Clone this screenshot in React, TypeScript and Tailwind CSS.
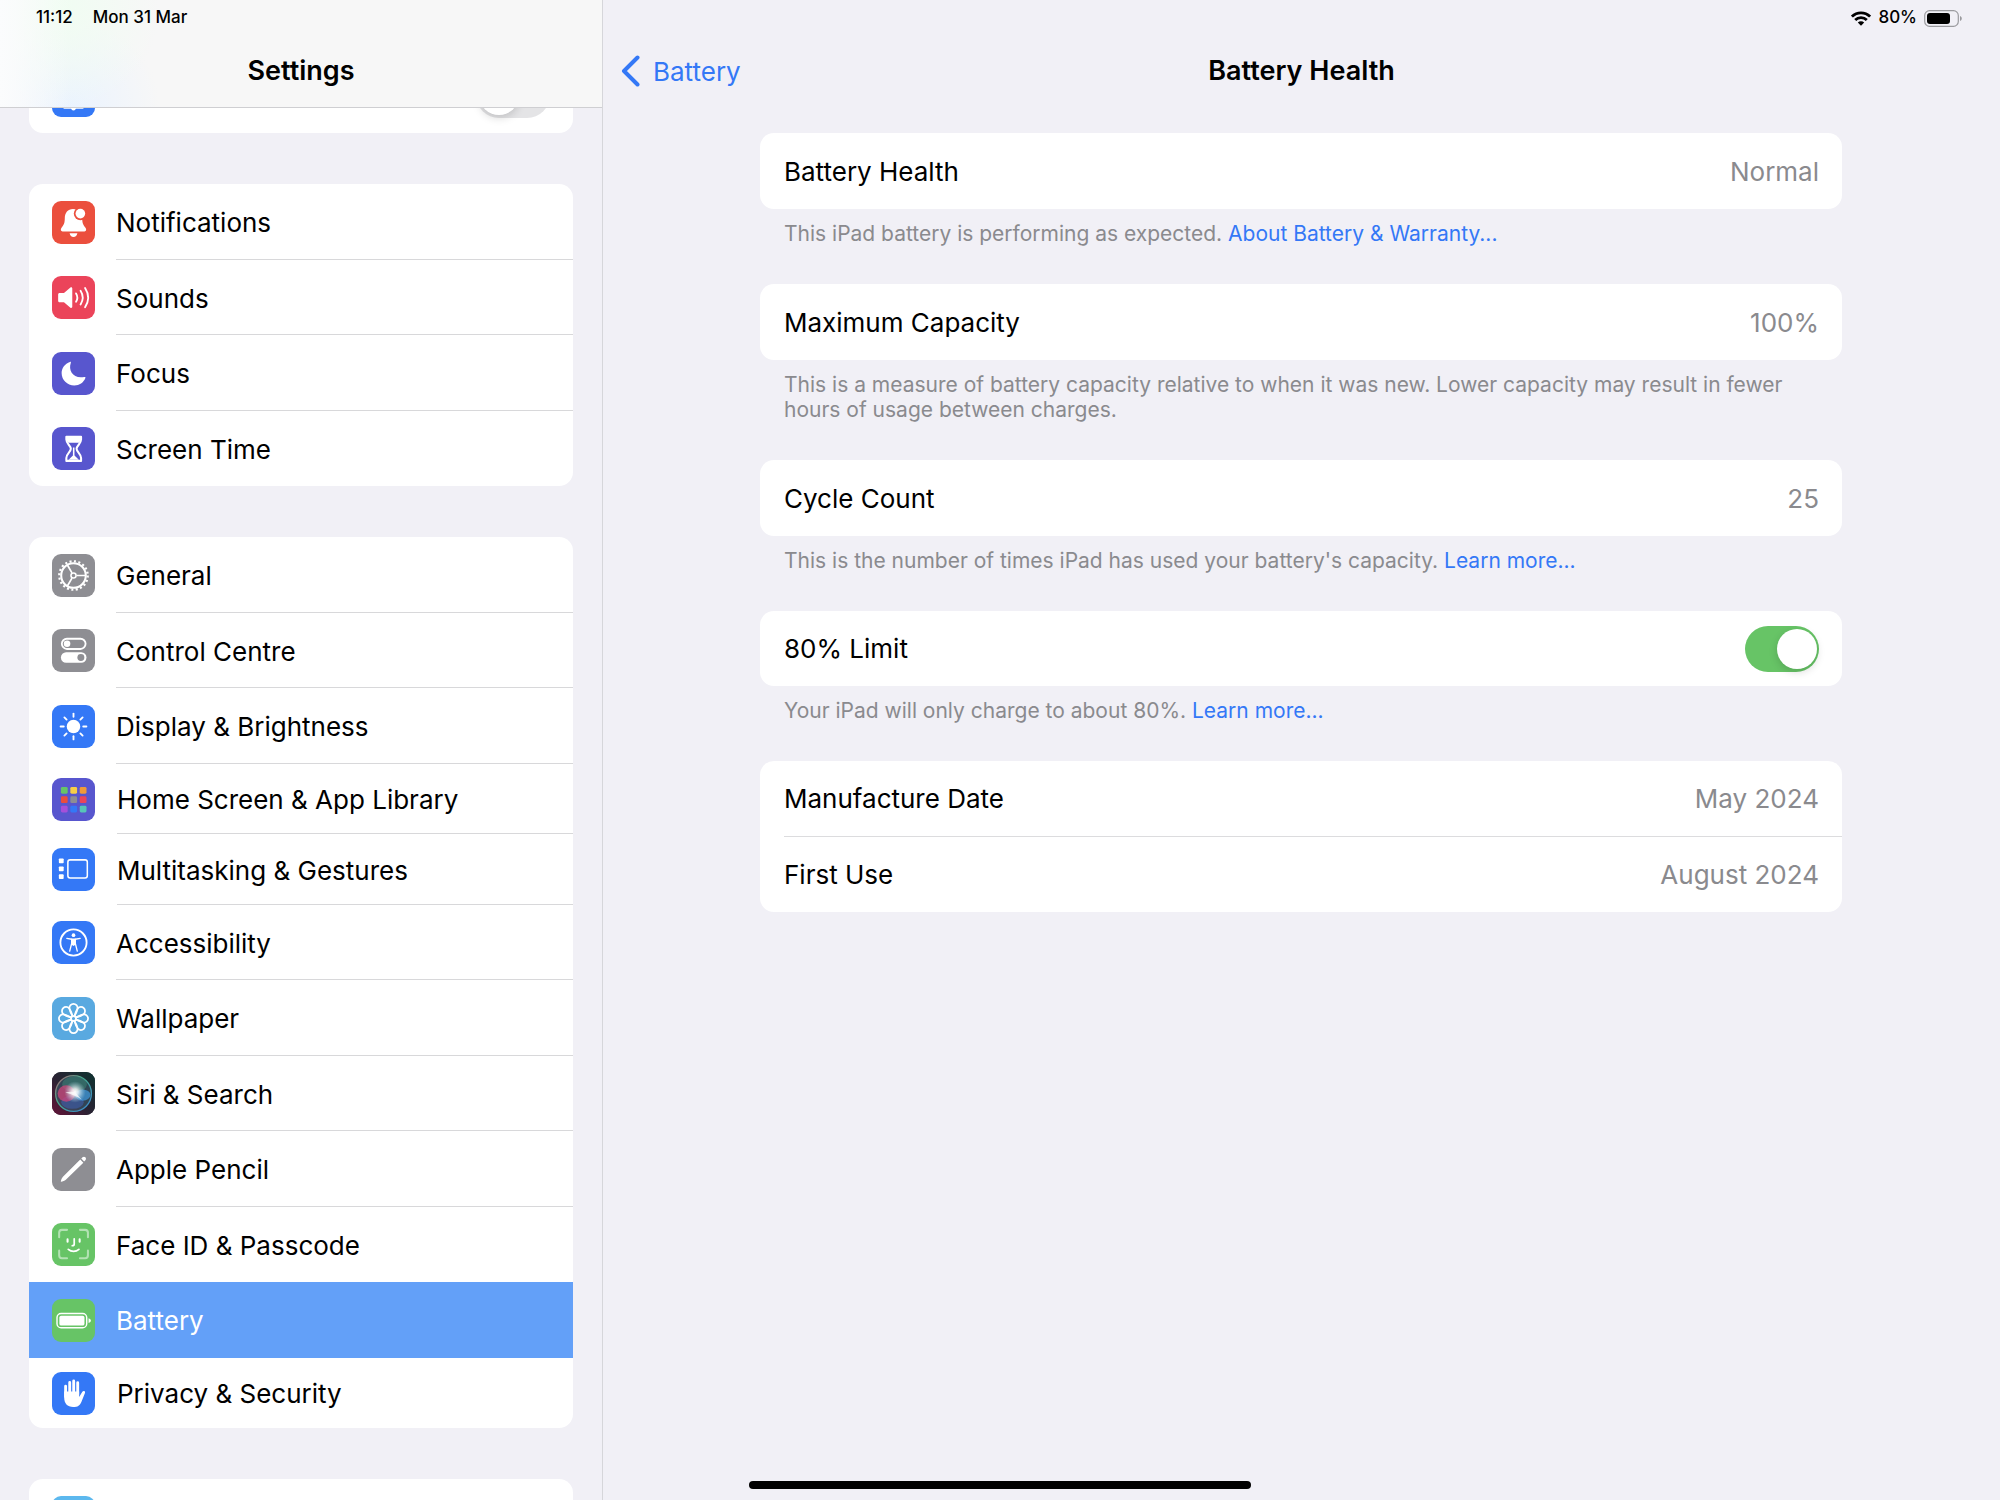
import type { ReactNode } from 'react';

interface SidebarItem {
  label: string;
  tile: string;
  icon: ReactNode;
  compact?: boolean;
  selected?: boolean;
}

/* Icons, all on a 42 x 42 tile */

function NotificationsIcon() {
  return (
    <>
      <path
        d="M20.5 7.7c-5 0-8 3.8-8 9 0 5-1 7-3.2 9.4-1.2 1.4-.8 3.6 1 3.6h21.4c1.8 0 2.2-2.2 1-3.6-2.2-2.4-3.2-4.4-3.2-9.4 0-5.2-4-9-9-9z"
        fill="#fff"
      />
      <path d="M17.2 31.5h7.6c-.4 2.2-1.8 3.6-3.8 3.6s-3.4-1.4-3.8-3.6z" fill="#fff" />
      <circle cx="27.7" cy="12.3" r="6.4" fill="#eb4f3d" />
      <circle cx="27.7" cy="12.3" r="4.7" fill="#fff" />
    </>
  );
}

function SoundsIcon() {
  return (
    <>
      <path
        d="M7.5 16.6h4.2l6.3-5.3c.8-.6 1.8-.2 1.8.8v18c0 1-1 1.4-1.8.8l-6.3-5.3H7.5c-1 0-1.5-.6-1.5-1.5v-6c0-.9.5-1.5 1.5-1.5z"
        fill="#fff"
      />
      <path
        d="M23.5 17c1.6 2.6 1.6 5.6 0 8.2M27.9 14.4c2.7 4.2 2.7 9 0 13.4M32.3 11.7c3.8 5.9 3.8 12.9 0 18.8"
        fill="none"
        stroke="#fff"
        strokeWidth="1.8"
        strokeLinecap="round"
      />
    </>
  );
}

function FocusIcon() {
  return (
    <path
      d="M17.5 9.7c.7-.3 1.2.1.9.9C15.6 18.5 21 26.5 31.5 24.4c.9-.2 1.4.3 1.1 1.1C30.8 30 26.8 32.8 21.8 32.8c-7 0-12.4-5.4-12.4-12.2 0-5 3.2-9.2 8.1-10.9z"
      fill="#fff"
    />
  );
}

function ScreenTimeIcon() {
  return (
    <>
      <path
        d="M14 9.5h14.4v2.8c0 4.2-4.4 6-4.4 9s4.4 4.8 4.4 9v2.8H14v-2.8c0-4.2 4.4-6 4.4-9s-4.4-4.8-4.4-9z"
        fill="none"
        stroke="#fff"
        strokeWidth="2"
        strokeLinejoin="round"
      />
      <path d="M14 9.5h14.4v3l-2 3H16l-2-3zM21.2 20v7l5 5h-10l5-5z" fill="#fff" />
      <path d="M21.2 20v8" stroke="#fff" strokeWidth="1.5" />
    </>
  );
}

function GeneralIcon() {
  return (
    <g fill="none" stroke="#fff">
      <circle cx="21" cy="21" r="13.9" strokeWidth="2.2" strokeDasharray="2 2.367" />
      <circle cx="21" cy="21" r="12" strokeWidth="2" />
      <circle cx="21" cy="21" r="2.5" strokeWidth="1.5" />
      <path d="M24 21h9M19.5 18.4 14.9 10.5M19.5 23.6l-4.6 7.9" strokeWidth="1.7" />
    </g>
  );
}

function ControlCentreIcon() {
  return (
    <>
      <rect x="9.6" y="9.5" width="23.2" height="10" rx="5" fill="none" stroke="#fff" strokeWidth="1.8" />
      <circle cx="14.7" cy="14.5" r="3.2" fill="#fff" />
      <rect x="8.7" y="22.7" width="25" height="10.2" rx="5.1" fill="#fff" />
      <circle cx="28.2" cy="27.8" r="3.4" fill="#8e8e93" />
    </>
  );
}

const SPOKES = [0, 45, 90, 135, 180, 225, 270, 315];

function DisplayIcon() {
  return (
    <>
      <circle cx="21" cy="21" r="6.6" fill="#fff" />
      {SPOKES.map((angle) => (
        <path
          key={angle}
          d="M21 11.5V8.4"
          transform={`rotate(${angle} 21 21)`}
          stroke="#fff"
          strokeWidth="1.8"
          strokeLinecap="round"
        />
      ))}
    </>
  );
}

const GRID_COLORS = [
  '#67c466', '#f7ce46', '#f19a38',
  '#eb4d3d', '#8e8e93', '#eb445a',
  '#a550d9', '#3478f6', '#57c5b7',
];

function HomeScreenIcon() {
  return (
    <>
      {GRID_COLORS.map((color, i) => (
        <rect
          key={color}
          x={8.7 + (i % 3) * 9.2}
          y={8.7 + Math.floor(i / 3) * 9.2}
          width="6.6"
          height="6.6"
          rx="1.4"
          fill={color}
        />
      ))}
    </>
  );
}

function MultitaskingIcon() {
  return (
    <>
      <rect x="6.7" y="10.3" width="4.7" height="4.7" rx=".8" fill="#fff" />
      <rect x="6.7" y="18" width="4.7" height="4.7" rx=".8" fill="#fff" />
      <rect x="6.7" y="25.7" width="4.7" height="4.7" rx=".8" fill="#fff" />
      <rect x="15.5" y="11.6" width="19" height="17.6" rx="2.2" fill="none" stroke="#fff" strokeWidth="1.5" />
    </>
  );
}

function AccessibilityIcon() {
  return (
    <>
      <circle cx="21" cy="21" r="12.8" fill="none" stroke="#fff" strokeWidth="1.8" />
      <circle cx="21" cy="13.8" r="1.8" fill="#fff" />
      <path
        d="M14.5 16.9l4.7.9v4.2l-1.9 7.4M27.5 16.9l-4.7.9v4.2l1.9 7.4"
        fill="none"
        stroke="#fff"
        strokeWidth="1.3"
        strokeLinecap="round"
        strokeLinejoin="round"
      />
      <path d="M18.8 17h4.4v6l-2.2 1.5-2.2-1.5z" fill="#fff" />
    </>
  );
}

function WallpaperIcon() {
  return (
    <g fill="none" stroke="#fff" strokeWidth="1.7" strokeLinejoin="round">
      {SPOKES.map((angle) => (
        <path key={angle} d="M20.2 19 18.4 13.8A4 4 0 1 1 23.6 13.8L21.8 19" transform={`rotate(${angle} 21 21)`} />
      ))}
      <circle cx="21" cy="21" r="2.4" />
    </g>
  );
}

function SiriIcon() {
  return (
    <>
      <defs>
        <linearGradient id="siri-bg" x1="0" y1="1" x2="1" y2="0">
          <stop offset="0" stopColor="#651338" />
          <stop offset=".45" stopColor="#2b2233" />
          <stop offset="1" stopColor="#0e3330" />
        </linearGradient>
        <radialGradient id="siri-glow">
          <stop offset="0" stopColor="#fff" />
          <stop offset=".3" stopColor="#fff" stopOpacity=".8" />
          <stop offset="1" stopColor="#a9d6e2" stopOpacity="0" />
        </radialGradient>
        <linearGradient id="siri-ring" x1="0" y1="0" x2="1" y2="1">
          <stop offset="0" stopColor="#b0606f" />
          <stop offset=".4" stopColor="#46a98c" />
          <stop offset="1" stopColor="#3a86d4" />
        </linearGradient>
      </defs>
      <rect width="42" height="42" fill="url(#siri-bg)" />
      <circle cx="21" cy="21" r="17.5" fill="#3b5a6c" fillOpacity=".6" stroke="url(#siri-ring)" strokeWidth="1.3" />
      <ellipse cx="22" cy="12" rx="12" ry="7.5" fill="#3f9c80" fillOpacity=".4" />
      <ellipse cx="20" cy="29.5" rx="11" ry="6.5" fill="#3e5fae" fillOpacity=".6" />
      <ellipse cx="14" cy="21" rx="8.5" ry="8" fill="#d8457c" fillOpacity=".7" />
      <ellipse cx="30" cy="22.5" rx="7.5" ry="5.5" fill="#3f9ae0" fillOpacity=".7" />
      <circle cx="22.5" cy="19.5" r="10.5" fill="url(#siri-glow)" />
      <path d="M13 20c4-1 7-1 10 0l6 7c-4-3-9-5-16-7z" fill="#fff" fillOpacity=".7" />
    </>
  );
}

function PencilIcon() {
  return (
    <>
      <path d="M27.6 11.3l3 3L13.5 31.1c-1.2 1-3 1.7-4.6 1.9-.3 0-.4-.2-.3-.5.4-1.5 1.1-3.2 2.1-4.3z" fill="#fff" />
      <path d="M28.6 10.3l1.2-1.2c.8-.8 2-.8 2.8 0s.8 2 0 2.8l-1.2 1.2z" fill="#fff" />
    </>
  );
}

function FaceIdIcon() {
  return (
    <g fill="none" stroke="#fff" strokeWidth="2" strokeLinecap="round">
      <path
        d="M7 14V9.5C7 7.8 8 6.7 9.7 6.7h5M27.3 6.7h5C34 6.7 35.1 7.8 35.1 9.5V14M35.1 27v4.600c0 1.700-1.100 2.800-2.800 2.800h-5M14.700 34.400h-5c-1.700 0-2.700-1.100-2.700-2.800V27"
        strokeOpacity=".5"
      />
      <path d="M15.2 16v2.4M27 16v2.4" />
      <path d="M21.7 15.500v5c0 1.100-.6 1.700-1.900 1.700M15.900 25.800c3 2.600 7.400 2.600 10.400 0" strokeWidth="1.7" />
    </g>
  );
}

function BatteryIcon() {
  return (
    <>
      <rect x="4.9" y="14.1" width="29" height="14" rx="4" fill="none" stroke="#fff" strokeWidth="1.4" />
      <rect x="7.2" y="16.3" width="24.5" height="9.6" rx="1.8" fill="#fff" />
      <path d="M35.7 18.7c1.5.5 2.3 1.4 2.3 2.4s-.8 1.9-2.3 2.4z" fill="#fff" />
    </>
  );
}

function HandIcon() {
  return (
    <>
      <path
        d="M13.3 13.8V24M17.3 10.2V22M21.2 8.8V22M25.1 10.4V22"
        stroke="#fff"
        strokeWidth="2.8"
        strokeLinecap="round"
      />
      <path
        d="M11.9 19h14.6v5.5l3-5c.9-1.5 3.3-1 2.7.9l-3.3 8.3c-1.4 3.6-3.8 5.6-8.2 5.6-5.8 0-8.8-3.6-8.8-9.3z"
        fill="#fff"
      />
    </>
  );
}

const ALERT_ITEMS: SidebarItem[] = [
  { label: 'Notifications', tile: 'bg-[#eb4f3d]', icon: <NotificationsIcon /> },
  { label: 'Sounds', tile: 'bg-[#eb445a]', icon: <SoundsIcon /> },
  { label: 'Focus', tile: 'bg-[#5856ce]', icon: <FocusIcon /> },
  { label: 'Screen Time', tile: 'bg-[#5856ce]', icon: <ScreenTimeIcon /> },
];

const DEVICE_ITEMS: SidebarItem[] = [
  { label: 'General', tile: 'bg-[#8e8e93]', icon: <GeneralIcon /> },
  { label: 'Control Centre', tile: 'bg-[#8e8e93]', icon: <ControlCentreIcon /> },
  { label: 'Display & Brightness', tile: 'bg-[#3478f6]', icon: <DisplayIcon /> },
  { label: 'Home Screen & App Library', tile: 'bg-[#5856ce]', icon: <HomeScreenIcon />, compact: true },
  { label: 'Multitasking & Gestures', tile: 'bg-[#3478f6]', icon: <MultitaskingIcon />, compact: true },
  { label: 'Accessibility', tile: 'bg-[#3478f6]', icon: <AccessibilityIcon /> },
  { label: 'Wallpaper', tile: 'bg-[#59a9e0]', icon: <WallpaperIcon /> },
  { label: 'Siri & Search', tile: 'bg-[#20242f]', icon: <SiriIcon /> },
  { label: 'Apple Pencil', tile: 'bg-[#8e8e93]', icon: <PencilIcon /> },
  { label: 'Face ID & Passcode', tile: 'bg-[#67c466]', icon: <FaceIdIcon /> },
  { label: 'Battery', tile: 'bg-[#67c466]', icon: <BatteryIcon />, selected: true },
  { label: 'Privacy & Security', tile: 'bg-[#3478f6]', icon: <HandIcon />, compact: true },
];

function Tile({ color, children }: { color: string; children?: ReactNode }) {
  return (
    <span className={`block size-[43px] shrink-0 overflow-hidden rounded-[9px] ${color}`}>
      <svg viewBox="0 0 42 42" className="block size-full" aria-hidden="true">
        {children}
      </svg>
    </span>
  );
}

function SidebarGroup({ items }: { items: SidebarItem[] }) {
  return (
    <ul className="overflow-hidden rounded-[14px] bg-white">
      {items.map((item, i) => {
        const divider = i < items.length - 1 && !item.selected && !items[i + 1].selected;
        return (
          <li
            key={item.label}
            className={`flex ${item.compact ? 'odd:h-[71px] even:h-[70px]' : 'odd:h-[76px] even:h-[75px]'}`}
          >
            <button
              type="button"
              aria-current={item.selected ? 'page' : undefined}
              className={`flex w-full items-center pl-[23px] text-left ${item.compact ? 'gap-[22px]' : 'gap-[21px]'} ${
                item.selected ? 'bg-[#63a0f8] text-white' : 'text-black'
              }`}
            >
              <Tile color={item.tile}>{item.icon}</Tile>
              <span
                className={`flex flex-1 items-center self-stretch border-b pt-0.5 ${
                  divider ? 'border-[#d8d8da]' : 'border-transparent'
                }`}
              >
                {item.label}
              </span>
            </button>
          </li>
        );
      })}
    </ul>
  );
}

function Toggle({ id, label, defaultChecked }: { id: string; label: string; defaultChecked?: boolean }) {
  return (
    <span className="relative block h-[46px] w-[74px] shrink-0">
      <input
        type="checkbox"
        role="switch"
        id={id}
        aria-label={label}
        defaultChecked={defaultChecked}
        className="peer block size-full cursor-pointer appearance-none rounded-full bg-[#e4e4e6] checked:bg-[#67c466]"
      />
      <span className="pointer-events-none absolute top-[3px] left-[3px] size-10 rounded-full bg-white shadow-[0_3px_8px_rgba(0,0,0,0.15)] peer-checked:left-8" />
    </span>
  );
}

function Sidebar() {
  return (
    <aside className="relative w-[603px] shrink-0 overflow-hidden border-r border-[#d6d6da]">
      <header className="absolute inset-x-0 top-0 z-10 flex h-[108px] flex-col border-b border-[#cfcfd2] bg-[#f7f7f7] bg-[linear-gradient(to_right,#fbfcfd,transparent_70px),radial-gradient(circle_at_60px_10px,#f0fdf2,transparent_100px),radial-gradient(circle_at_70px_108px,#eaf3ff,transparent_90px)]">
        <div className="flex h-9 items-center gap-5 pl-9 text-[17px] font-medium">
          <span>11:12</span>
          <span>Mon 31 Mar</span>
        </div>
        <h1 className="flex h-[70px] items-center justify-center text-[27px] font-semibold">Settings</h1>
      </header>

      <nav aria-label="Settings" className="flex flex-col gap-[51px] px-[29px] pt-[57px] text-[26px]">
        <div className="flex h-[76px] items-center justify-between rounded-b-[14px] bg-white px-[23px]">
          <Tile color="bg-[#3478f6]">
            <path d="M12 33h18" stroke="#fff" strokeWidth="2" strokeLinecap="round" />
            <circle cx="21" cy="33.5" r="2.2" fill="#fff" />
          </Tile>
          <Toggle id="vpn" label="VPN" />
        </div>
        <SidebarGroup items={ALERT_ITEMS} />
        <SidebarGroup items={DEVICE_ITEMS} />
        <div className="flex h-[76px] items-center rounded-t-[14px] bg-white px-[23px]">
          <Tile color="bg-[#5cb8ee]" />
        </div>
      </nav>
    </aside>
  );
}

function Card({ children }: { children: ReactNode }) {
  return <div className="rounded-[14px] bg-white pl-6 text-[26px]">{children}</div>;
}

function Row({ label, value }: { label: string; value: string }) {
  return (
    <div className="flex h-[76px] items-center justify-between pr-[23px] even:h-[75px]">
      <span>{label}</span>
      <span className="text-[#8a8a8e]">{value}</span>
    </div>
  );
}

function Caption({ children }: { children: ReactNode }) {
  return <p className="px-6 pt-3 pb-[38px] text-[21px] leading-[25px] text-[#8a8a8e]">{children}</p>;
}

function CaptionLink({ children }: { children: ReactNode }) {
  return (
    <a href="#" className="text-[#3478f6]">
      {children}
    </a>
  );
}

function StatusIcons() {
  return (
    <div className="flex h-9 items-center justify-end gap-[7px] pr-[38px] text-[17px] font-medium">
      <svg viewBox="0 0 20 15" className="h-[15px] w-5" aria-hidden="true">
        <g fill="none" stroke="#000" strokeWidth="2.8">
          <path d="M.9 5.6a12.9 12.9 0 0 1 18.2 0" />
          <path d="M4.2 9a8.2 8.2 0 0 1 11.6 0" />
        </g>
        <path d="M6.8 11.5a4.5 4.5 0 0 1 6.4 0L10 14.8z" />
      </svg>
      <span>80%</span>
      <svg viewBox="0 0 38 17" className="h-[17px] w-[38px]" aria-hidden="true">
        <rect x=".7" y=".7" width="33.6" height="15.6" rx="4.8" fill="none" stroke="#9b9b9f" strokeWidth="1.2" />
        <rect x="3" y="3" width="23" height="11" rx="3" />
        <path d="M36 6c1.2.5 1.8 1.4 1.8 2.5S37.2 10.5 36 11z" fill="#9b9b9f" />
      </svg>
    </div>
  );
}

export default function App() {
  return (
    <div className="relative flex h-screen overflow-hidden bg-[#f1f0f6] font-[Inter,Roboto,sans-serif] text-black">
      <Sidebar />

      <main className="min-w-0 flex-1">
        <StatusIcons />
        <header className="grid h-[70px] grid-cols-[1fr_auto_1fr] items-center px-[18px] text-[26px]">
          <button type="button" className="flex items-center gap-[13px] justify-self-start text-[#3478f6]">
            <svg viewBox="0 0 19 32" className="h-8 w-[19px]" aria-hidden="true">
              <path
                d="M16.5 2.5 3 16l13.5 13.5"
                fill="none"
                stroke="currentColor"
                strokeWidth="4"
                strokeLinecap="round"
                strokeLinejoin="round"
              />
            </svg>
            Battery
          </button>
          <h2 className="text-[27px] font-semibold">Battery Health</h2>
        </header>

        <div className="pt-[27px] pr-[158px] pl-[157px]">
          <Card>
            <Row label="Battery Health" value="Normal" />
          </Card>
          <Caption>
            This iPad battery is performing as expected. <CaptionLink>About Battery &amp; Warranty...</CaptionLink>
          </Caption>

          <Card>
            <Row label="Maximum Capacity" value="100%" />
          </Card>
          <Caption>
            This is a measure of battery capacity relative to when it was new. Lower capacity may result in fewer hours
            of usage between charges.
          </Caption>

          <Card>
            <Row label="Cycle Count" value="25" />
          </Card>
          <Caption>
            This is the number of times iPad has used your battery's capacity. <CaptionLink>Learn more...</CaptionLink>
          </Caption>

          <Card>
            <div className="flex h-[75px] items-center justify-between pr-[23px]">
              <label htmlFor="charge-limit">80% Limit</label>
              <Toggle id="charge-limit" label="80% Limit" defaultChecked />
            </div>
          </Card>
          <Caption>
            Your iPad will only charge to about 80%. <CaptionLink>Learn more...</CaptionLink>
          </Caption>

          <Card>
            <div className="divide-y divide-[#dcdcde]">
              <Row label="Manufacture Date" value="May 2024" />
              <Row label="First Use" value="August 2024" />
            </div>
          </Card>
        </div>
      </main>

      {/* Home indicator */}
      <div className="absolute bottom-[11px] left-1/2 h-2 w-[502px] -translate-x-1/2 rounded-full bg-black" />
    </div>
  );
}
